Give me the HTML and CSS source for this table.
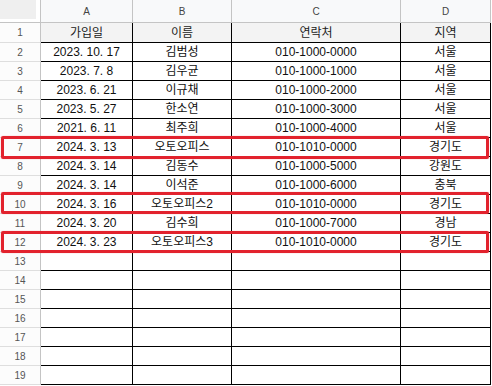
FILE: index.html
```html
<!DOCTYPE html>
<html lang="ko">
<head>
<meta charset="utf-8">
<link rel="stylesheet" href="styles.css">
</head>
<body>
<div class="sheet">
  <div class="grid">
    <div class="corner"><div class="corner-box"></div></div>
    <div class="colhead">A</div><div class="colhead">B</div><div class="colhead">C</div><div class="colhead">D</div>

    <div class="rn">1</div><div class="c hd">가입일</div><div class="c hd">이름</div><div class="c hd">연락처</div><div class="c hd">지역</div>
    <div class="rn">2</div><div class="c">2023. 10. 17</div><div class="c">김범성</div><div class="c">010-1000-0000</div><div class="c">서울</div>
    <div class="rn">3</div><div class="c">2023. 7. 8</div><div class="c">김우균</div><div class="c">010-1000-1000</div><div class="c">서울</div>
    <div class="rn">4</div><div class="c">2023. 6. 21</div><div class="c">이규채</div><div class="c">010-1000-2000</div><div class="c">서울</div>
    <div class="rn">5</div><div class="c">2023. 5. 27</div><div class="c">한소연</div><div class="c">010-1000-3000</div><div class="c">서울</div>
    <div class="rn">6</div><div class="c">2021. 6. 11</div><div class="c">최주희</div><div class="c">010-1000-4000</div><div class="c">서울</div>
    <div class="rn">7</div><div class="c">2024. 3. 13</div><div class="c">오토오피스</div><div class="c">010-1010-0000</div><div class="c">경기도</div>
    <div class="rn">8</div><div class="c">2024. 3. 14</div><div class="c">김동수</div><div class="c">010-1000-5000</div><div class="c">강원도</div>
    <div class="rn">9</div><div class="c">2024. 3. 14</div><div class="c">이석준</div><div class="c">010-1000-6000</div><div class="c">충북</div>
    <div class="rn">10</div><div class="c">2024. 3. 16</div><div class="c">오토오피스2</div><div class="c">010-1010-0000</div><div class="c">경기도</div>
    <div class="rn">11</div><div class="c">2024. 3. 20</div><div class="c">김수희</div><div class="c">010-1000-7000</div><div class="c">경남</div>
    <div class="rn">12</div><div class="c">2024. 3. 23</div><div class="c">오토오피스3</div><div class="c">010-1010-0000</div><div class="c">경기도</div>
    <div class="rn">13</div><div class="c"></div><div class="c"></div><div class="c"></div><div class="c"></div>
    <div class="rn">14</div><div class="c"></div><div class="c"></div><div class="c"></div><div class="c"></div>
    <div class="rn">15</div><div class="c"></div><div class="c"></div><div class="c"></div><div class="c"></div>
    <div class="rn">16</div><div class="c"></div><div class="c"></div><div class="c"></div><div class="c"></div>
    <div class="rn">17</div><div class="c"></div><div class="c"></div><div class="c"></div><div class="c"></div>
    <div class="rn">18</div><div class="c"></div><div class="c"></div><div class="c"></div><div class="c"></div>
    <div class="rn">19</div><div class="c"></div><div class="c"></div><div class="c"></div><div class="c"></div>
  </div>
  <div class="mark mark-7"></div>
  <div class="mark mark-10"></div>
  <div class="mark mark-12"></div>
</div>
</body>
</html>
```
FILE: styles.css
```css
html, body {
  margin: 0;
  padding: 0;
  background: #ffffff;
}

.sheet {
  position: relative;
  width: 492px;
  height: 386px;
  overflow: hidden;
  font-family: "Liberation Sans", "Noto Sans CJK KR", sans-serif;
}

.grid {
  display: grid;
  grid-template-columns: 41px 92px 99px 169px 90px;
  grid-template-rows: 23px 20px repeat(18, 19px);
}

.grid > div {
  box-sizing: border-box;
  display: flex;
  align-items: center;
  justify-content: center;
  white-space: nowrap;
  overflow: hidden;
}

.corner {
  background: #ffffff;
  border-right: 1px solid #c4c4c4;
  border-bottom: 1px solid #c4c4c4;
  align-items: flex-start !important;
  justify-content: flex-start !important;
}

.corner-box {
  width: 36px;
  height: 19px;
  background: #efefef;
}

.colhead {
  background: #f8f9fa;
  border-right: 1px solid #c4c4c4;
  border-bottom: 1px solid #c4c4c4;
  color: #444444;
  font-size: 10px;
}

.rn {
  background: #fcfcfc;
  border-right: 1px solid #c4c4c4;
  border-bottom: 1px solid #dedede;
  color: #555555;
  font-size: 10px;
}

.c {
  border-right: 1px solid #000000;
  border-bottom: 1px solid #000000;
  color: #111111;
  font-size: 12px;
  line-height: 14px;
}

.c.hd {
  background: #f3f3f3;
  color: #222222;
}

.mark {
  position: absolute;
  left: 1px;
  width: 488px;
  box-sizing: border-box;
  border: 3px solid #e2222d;
  border-radius: 2px;
  box-shadow: 0 0 1px rgba(226, 34, 45, 0.6);
}

.mark-7 {
  top: 136px;
  height: 23px;
}

.mark-10 {
  top: 192px;
  height: 22px;
}

.mark-12 {
  top: 231px;
  height: 22px;
}
```
